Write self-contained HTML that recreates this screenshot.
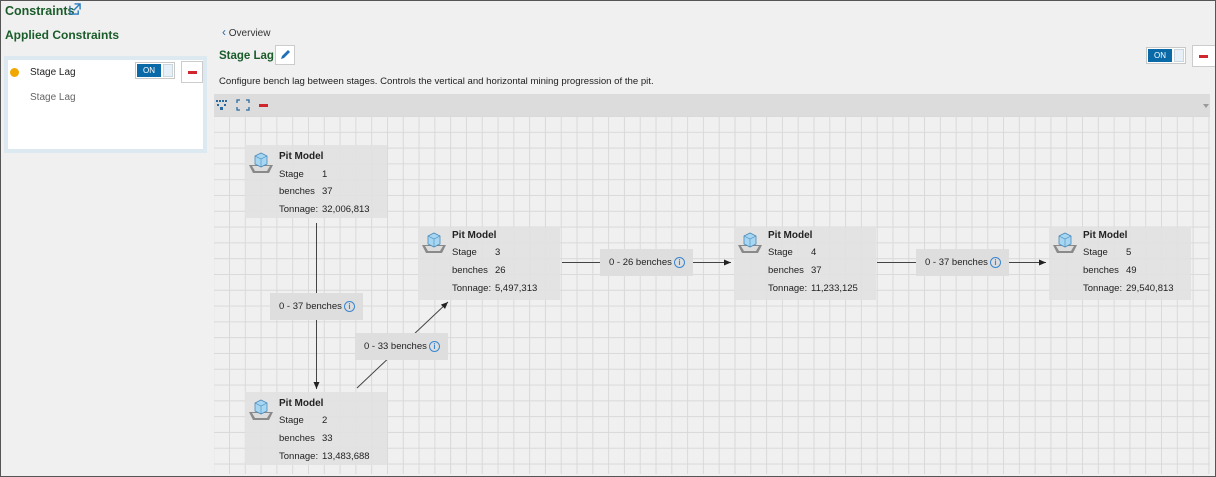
<!DOCTYPE html>
<html><head><meta charset="utf-8"><style>
*{box-sizing:border-box;margin:0;padding:0}
body{width:1216px;height:477px;overflow:hidden;background:#f0f0f0;font-family:"Liberation Sans",sans-serif;font-size:10px;color:#222;position:relative}
.frame{position:absolute;left:0;top:0;width:1216px;height:477px;border:1px solid #555;z-index:50;pointer-events:none}
.abs{position:absolute}
.h1{color:#1a5c2a;font-weight:bold;font-size:12px}
.card{left:4px;top:56px;width:203px;height:97px;background:#fff;border:4px solid #dce9f0}
.tog{width:40px;height:17px;border:1px solid #c8c8c8;background:#fff;padding:1px}
.tog .on{position:absolute;left:1px;top:1px;width:24px;height:13px;background:#0a6aa8;color:#fff;font-size:8px;text-align:center;line-height:13px}
.tog .off{position:absolute;left:27px;top:1px;width:10px;height:13px;background:#e6f0f6;border:1px solid #c9d6de}
.minus{width:22px;height:22px;background:#fff;border:1px solid #ccc}
.minus:after{content:"";position:absolute;left:6px;top:9px;width:9px;height:3px;background:#d0262e}
.canvas{left:214px;top:116px;width:996px;height:358px;background-color:#f0f0f0;
background-image:linear-gradient(to right,#d9d9d9 1px,transparent 1px),linear-gradient(to bottom,#d9d9d9 1px,transparent 1px);
background-size:15.8px 15.8px;background-position:15px 0px}
.tb{left:214px;top:94px;width:996px;height:22px;background:#dcdcdc}
.node{position:absolute;width:142px;height:73px;background:rgba(225,225,225,.9)}
.node .t{position:absolute;left:34px;top:6px;font-weight:bold;font-size:10px}
.node .r{position:absolute;left:34px;font-size:9.5px}
.node .v{position:absolute;left:77px;font-size:9.5px}
.lbl{position:absolute;width:93px;height:27px;background:#dedede;font-size:9.5px;line-height:27px;padding-left:9px}
.lbl i{position:absolute;right:8px;top:8px;width:11px;height:11px;border:1px solid #3a86d0;border-radius:50%;font-style:normal;color:#3a86d0;font-size:8px;line-height:9px;text-align:center;font-weight:bold}
</style></head><body>
<div class="frame"></div>
<div class="abs h1" style="left:5px;top:4px;font-size:12.5px">Constraints</div>
<svg class="abs" style="left:69px;top:3px" width="12" height="12" viewBox="0 0 13 13"><path d="M1 3v9h9V8" fill="none" stroke="#2a7ac0" stroke-width="1.5"/><path d="M6 1h6v6M12 1L5 8" fill="none" stroke="#2a7ac0" stroke-width="1.5"/></svg>
<div class="abs h1" style="left:5px;top:28px">Applied Constraints</div>
<div class="abs card"></div>
<div class="abs" style="left:10px;top:68px;width:9px;height:9px;border-radius:50%;background:#f0a800"></div>
<div class="abs" style="left:30px;top:67px;font-size:10px">Stage Lag</div>
<div class="abs" style="left:30px;top:92px;font-size:10px;color:#666">Stage Lag</div>
<div class="abs tog" style="left:135px;top:62px"><div class="on">ON</div><div class="off"></div></div>
<div class="abs minus" style="left:181px;top:61px"></div>

<div class="abs" style="left:222px;top:25px;font-size:10px;color:#333"><span style="color:#2a6aa0;font-size:12px">&#8249;</span> Overview</div>
<div class="abs h1" style="left:219px;top:50px;font-size:11.5px">Stage Lag</div>
<div class="abs" style="left:275px;top:45px;width:20px;height:20px;background:#fff;border:1px solid #ccc"></div>
<svg class="abs" style="left:279px;top:49px" width="12" height="12" viewBox="0 0 12 12"><path d="M2 10l1-3 6-6 2 2-6 6z" fill="#1f6fb8"/></svg>
<div class="abs tog" style="left:1146px;top:47px"><div class="on">ON</div><div class="off"></div></div>
<div class="abs minus" style="left:1192px;top:45px;width:24px"></div>
<div class="abs" style="left:219px;top:76px;font-size:9.6px">Configure bench lag between stages. Controls the vertical and horizontal mining progression of the pit.</div>

<div class="abs tb"></div>
<svg class="abs" style="left:216px;top:99px" width="60" height="12"><g fill="#2a6aa0"><rect x="0" y="1" width="2" height="2"/><rect x="3" y="1" width="2" height="2"/><rect x="6" y="1" width="2" height="2"/><rect x="9" y="1" width="2" height="2"/><rect x="1" y="5" width="2" height="2"/><rect x="8" y="5" width="2" height="2"/><rect x="4" y="8" width="3" height="3"/></g><path d="M21 4V1h3M30 1h3v3M33 8v3h-3M24 11h-3V8" fill="none" stroke="#2a6aa0" stroke-width="1.3"/><rect x="43" y="5" width="9" height="3" fill="#d0262e"/></svg>
<div class="abs canvas"></div>
<div class="abs" style="left:1203px;top:104px;width:0;height:0;border-left:3px solid transparent;border-right:3px solid transparent;border-top:4px solid #999"></div>

<svg class="abs" style="left:0;top:0" width="1216" height="477">
<defs><marker id="a" markerWidth="8" markerHeight="8" refX="7" refY="4" orient="auto"><path d="M0 1L7 4L0 7z" fill="#222"/></marker></defs>
<g stroke="#444" stroke-width="1" fill="none">
<line x1="316.5" y1="223" x2="316.5" y2="389" marker-end="url(#a)"/>
<line x1="357" y1="388" x2="448" y2="302" marker-end="url(#a)"/>
<line x1="562" y1="262.5" x2="731" y2="262.5" marker-end="url(#a)"/>
<line x1="877" y1="262.5" x2="1046" y2="262.5" marker-end="url(#a)"/>
</g></svg>

<div class="lbl" style="left:270px;top:293px">0 - 37 benches<i>i</i></div>
<div class="lbl" style="left:355px;top:333px">0 - 33 benches<i>i</i></div>
<div class="lbl" style="left:600px;top:249px">0 - 26 benches<i>i</i></div>
<div class="lbl" style="left:916px;top:249px">0 - 37 benches<i>i</i></div>

<svg width="0" height="0" style="position:absolute"><defs><g id="ic"><path d="M0 13h24l-4 8H4z" fill="#8a8a8a"/><path d="M3 14h18l-3 5H6z" fill="#dcdcdc"/><path d="M6 4l6-3 6 3v8l-6 3-6-3z" fill="#a6d6f2" stroke="#4a8ab8" stroke-width=".8"/><path d="M6 4l6 3 6-3M12 7v8" fill="none" stroke="#4a8ab8" stroke-width=".6"/></g></defs></svg>

<div class="node" style="left:245px;top:145px"><svg class="abs" style="left:4px;top:7px" width="24" height="24"><use href="#ic"/></svg><div class="t">Pit Model</div><div class="r" style="top:24px">Stage</div><div class="v" style="top:24px">1</div><div class="r" style="top:41px">benches</div><div class="v" style="top:41px">37</div><div class="r" style="top:59px">Tonnage:</div><div class="v" style="top:59px">32,006,813</div></div>
<div class="node" style="left:245px;top:392px"><svg class="abs" style="left:4px;top:7px" width="24" height="24"><use href="#ic"/></svg><div class="t">Pit Model</div><div class="r" style="top:23px">Stage</div><div class="v" style="top:23px">2</div><div class="r" style="top:41px">benches</div><div class="v" style="top:41px">33</div><div class="r" style="top:59px">Tonnage:</div><div class="v" style="top:59px">13,483,688</div></div>
<div class="node" style="left:418px;top:227px"><svg class="abs" style="left:4px;top:5px" width="24" height="24"><use href="#ic"/></svg><div class="t" style="top:3px">Pit Model</div><div class="r" style="top:20px">Stage</div><div class="v" style="top:20px">3</div><div class="r" style="top:38px">benches</div><div class="v" style="top:38px">26</div><div class="r" style="top:56px">Tonnage:</div><div class="v" style="top:56px">5,497,313</div></div>
<div class="node" style="left:734px;top:227px"><svg class="abs" style="left:4px;top:5px" width="24" height="24"><use href="#ic"/></svg><div class="t" style="top:3px">Pit Model</div><div class="r" style="top:20px">Stage</div><div class="v" style="top:20px">4</div><div class="r" style="top:38px">benches</div><div class="v" style="top:38px">37</div><div class="r" style="top:56px">Tonnage:</div><div class="v" style="top:56px">11,233,125</div></div>
<div class="node" style="left:1049px;top:227px"><svg class="abs" style="left:4px;top:5px" width="24" height="24"><use href="#ic"/></svg><div class="t" style="top:3px">Pit Model</div><div class="r" style="top:20px">Stage</div><div class="v" style="top:20px">5</div><div class="r" style="top:38px">benches</div><div class="v" style="top:38px">49</div><div class="r" style="top:56px">Tonnage:</div><div class="v" style="top:56px">29,540,813</div></div>
</body></html>
